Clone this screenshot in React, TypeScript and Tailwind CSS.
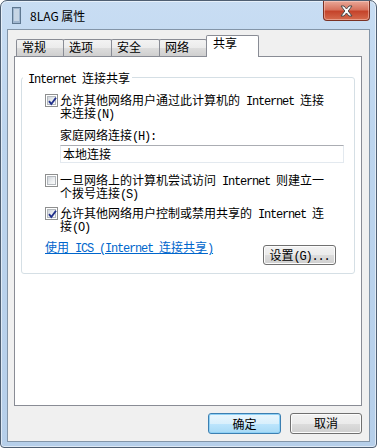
import type { ReactNode } from 'react';

const mono = "font-['Liberation_Mono',monospace] text-[12px] leading-[6px] tracking-[-1.2px]";

function M({ children }: { children: ReactNode }) {
  return <span className={mono}>{children}</span>;
}

function CheckBox({ checked }: { checked: boolean }) {
  return (
    <div className="mt-[1px] h-[13px] w-[13px] shrink-0 border border-[#8e8f8f] bg-white p-[1px]">
      <div className="relative h-full w-full border border-[#b4b9be] bg-[linear-gradient(135deg,#cfd4da,#eef0f2_60%,#fbfbfb)]">
        {checked && (
          <svg className="absolute left-[-1px] top-[-1px]" width="11" height="11" viewBox="0 0 11 11">
            <path d="M2 5.2 L4.3 8 L9 1.8" fill="none" stroke="#22318c" strokeWidth="1.9" />
          </svg>
        )}
      </div>
    </div>
  );
}

function WinButton({ children, primary, className }: { children: ReactNode; primary?: boolean; className: string }) {
  return (
    <div
      className={
        primary
          ? `rounded-[3px] border border-[#3c7fb1] bg-[linear-gradient(#eaf6fd,#d9f0fc_50%,#bee6fd_50%,#a7d9f5)] text-center leading-[19px] shadow-[inset_0_0_0_1px_#8fd1f6] ${className}`
          : `rounded-[3px] border border-[#707070] bg-[linear-gradient(#f2f2f2,#ebebeb_50%,#dddddd_50%,#cfcfcf)] text-center leading-[18px] shadow-[inset_0_0_0_1px_#fcfcfc] ${className}`
      }
    >
      {children}
    </div>
  );
}

const tabs = [
  { label: '常规', w: 'w-[48px]' },
  { label: '选项', w: 'w-[49px]' },
  { label: '安全', w: 'w-[49px]' },
  { label: '网络', w: 'w-[48px]' },
];

export default function App() {
  return (
    <div className="h-[448px] w-[377px] overflow-hidden rounded-t-[7px] rounded-b-[4px] border border-[#4f5f72] bg-[linear-gradient(#c8ddf3,#bdd5ee_30%,#b6cfea)] font-['Noto_Sans_CJK_SC',sans-serif] text-[12px] leading-[13px] text-black shadow-[inset_0_0_0_1px_rgba(255,255,255,0.55)]">
      {/* title bar */}
      <div className="flex h-[28px] items-start pr-[6px]">
        <svg className="ml-[11px] mt-[6px]" width="9" height="17" viewBox="0 0 9 17">
          <rect x="0.5" y="0.5" width="8" height="16" fill="#9fb6cf" stroke="#5f7891" />
          <path d="M2 3h5M2 5h5M2 7h5M2 9h5M2 11h5M2 13h5" stroke="#eef4fa" strokeWidth="1" />
        </svg>
        <div className="ml-[9px] mt-[7px] text-[12px] leading-[15px]">8LAG 属性</div>
        <div className="ml-auto flex h-[20px] w-[47px] items-center justify-center rounded-b-[4px] border border-t-0 border-[#7a3124] bg-[linear-gradient(#e9a898,#d7735e_45%,#c5442b_55%,#d56b4e)] shadow-[inset_0_0_0_1px_rgba(255,220,210,0.45)]">
          <svg width="15" height="12" viewBox="0 0 15 12">
            <path
              d="M2 1 L5 1 L7.5 4 L10 1 L13 1 L9.2 6 L13 11 L10 11 L7.5 8 L5 11 L2 11 L5.8 6 Z"
              fill="#ffffff"
              stroke="#4a4a4a"
              strokeWidth="1"
              strokeLinejoin="round"
            />
          </svg>
        </div>
      </div>

      {/* client area */}
      <div className="ml-[6px] h-[413px] w-[363px] border border-[#8395a8] bg-[#f0f0f0] pt-[5px]">
        <div className="ml-[6px] mr-[7px]">
          <div className="relative z-10 -mb-px flex h-[22px] items-end pl-[2px]">
            {tabs.map((t) => (
              <div
                key={t.label}
                className={`mb-px -mr-px h-[17px] ${t.w} rounded-t-[2px] border border-b-0 border-[#898c95] bg-[linear-gradient(#f3f3f3,#ebebeb_50%,#dddddd_50%,#cfcfcf)] pl-[5px]`}
              >
                {t.label}
              </div>
            ))}
            <div className="h-[22px] w-[53px] rounded-t-[2px] border border-b-0 border-[#898c95] bg-white pl-[6px]">共享</div>
          </div>

          <div className="h-[350px] border border-[#898c95] bg-white pt-[20px]">
            <div className="relative mx-[6px] rounded-[3px] border border-[#d5dfe5] pb-[8px] pl-[23px] pr-[18px] pt-[15px]">
              <div className="absolute left-[1px] top-[-7px] bg-white pl-[5px] pr-[2px]">
                <M>Internet </M>连接共享
              </div>

              <div className="flex items-start gap-[2px]">
                <CheckBox checked />
                <div>
                  允许其他网络用户通过此计算机的<M> Internet </M>连接
                  <br />
                  来连接<M>(N)</M>
                </div>
              </div>

              <div className="ml-[15px] mt-[9px]">
                家庭网络连接<M>(H):</M>
              </div>
              <div className="ml-[15px] mt-[4px] h-[18px] w-[284px] border border-[#e3e9ef] border-t-[#abadb3] pl-[2px] leading-[16px]">
                本地连接
              </div>

              <div className="mt-[10px] flex items-start gap-[2px]">
                <CheckBox checked={false} />
                <div>
                  一旦网络上的计算机尝试访问<M> Internet </M>则建立一
                  <br />
                  个拨号连接<M>(S)</M>
                </div>
              </div>

              <div className="mt-[7px] flex items-start gap-[2px]">
                <CheckBox checked />
                <div>
                  允许其他网络用户控制或禁用共享的<M> Internet </M>连
                  <br />
                  接<M>(O)</M>
                </div>
              </div>

              <div className="mt-[8px] flex items-start justify-between">
                <div className="text-[#0066cc] underline">
                  使用<M> ICS (Internet </M>连接共享<M>)</M>
                </div>
                <WinButton className="mt-[5px] h-[20px] w-[73px]">
                  设置<M>(G)...</M>
                </WinButton>
              </div>
            </div>
          </div>

          <div className="mt-[7px] flex justify-end gap-[9px]">
            <WinButton primary className="h-[21px] w-[73px]">
              确定
            </WinButton>
            <WinButton className="h-[21px] w-[72px]">取消</WinButton>
          </div>
        </div>
      </div>
    </div>
  );
}
